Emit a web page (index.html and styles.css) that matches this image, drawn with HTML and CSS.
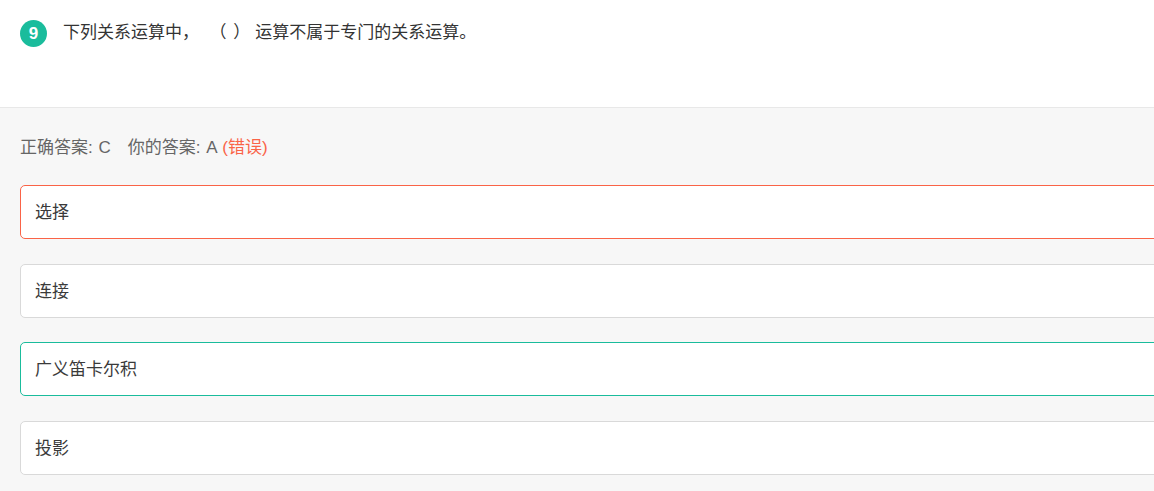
FILE: index.html
```html
<!DOCTYPE html>
<html lang="zh-CN">
<head>
  <meta charset="UTF-8" />
  <title>答题结果</title>
  <link rel="stylesheet" href="styles.css">
</head>
<body>

  <div class="question">
    <span class="num">9</span>
    <span class="title">下列关系运算中，<span class="blank">（&nbsp;）</span>运算不属于专门的关系运算。</span>
  </div>

  <div class="result">
    <div class="answer">
      正确答案: C<span class="gap"></span>你的答案: A <span class="wrong">(错误)</span>
    </div>

    <div class="option mine">选择</div>
    <div class="option">连接</div>
    <div class="option right">广义笛卡尔积</div>
    <div class="option">投影</div>
  </div>

</body>
</html>
```

FILE: styles.css
```css
html, body {
  overflow: hidden;
}

body {
  margin: 0;
  font-family: 'Liberation Sans', 'Noto Sans CJK SC', sans-serif;
  font-size: 17px;
  color: #333;
  background: #f7f7f7;
}

.question {
  display: flex;
  align-items: flex-start;
  height: 108px;
  box-sizing: border-box;
  padding: 20px 20px 0;
  background: #fff;
  border-bottom: 1px solid #e8e8e8;
}

.num {
  width: 27px;
  height: 27px;
  border-radius: 50%;
  background: #1abc9c;
  color: #fff;
  font-size: 17px;
  font-weight: bold;
  display: flex;
  align-items: center;
  justify-content: center;
  flex-shrink: 0;
}

.title {
  margin-left: 16px;
  line-height: 25px;
}

.blank {
  margin: 0 4px 0 19px;
  letter-spacing: 1px;
}

.result {
  padding: 28px 20px 0;
}

.answer {
  color: #666;
  line-height: 24px;
  word-spacing: 1px;
}

.gap {
  display: inline-block;
  width: 17px;
}

.wrong {
  color: #fa6347;
}

.option {
  width: 1200px;
  height: 54px;
  box-sizing: border-box;
  margin-top: 24.67px;
  padding: 0 14px 3px;
  display: flex;
  align-items: center;
  background: #fff;
  border: 1px solid #d9d9d9;
  border-radius: 5px;
  color: #3a3a3a;
}

.answer + .option {
  margin-top: 25px;
}

.option.mine {
  border-color: #fa6347;
}

.option.right {
  border-color: #1abc9c;
}
```
